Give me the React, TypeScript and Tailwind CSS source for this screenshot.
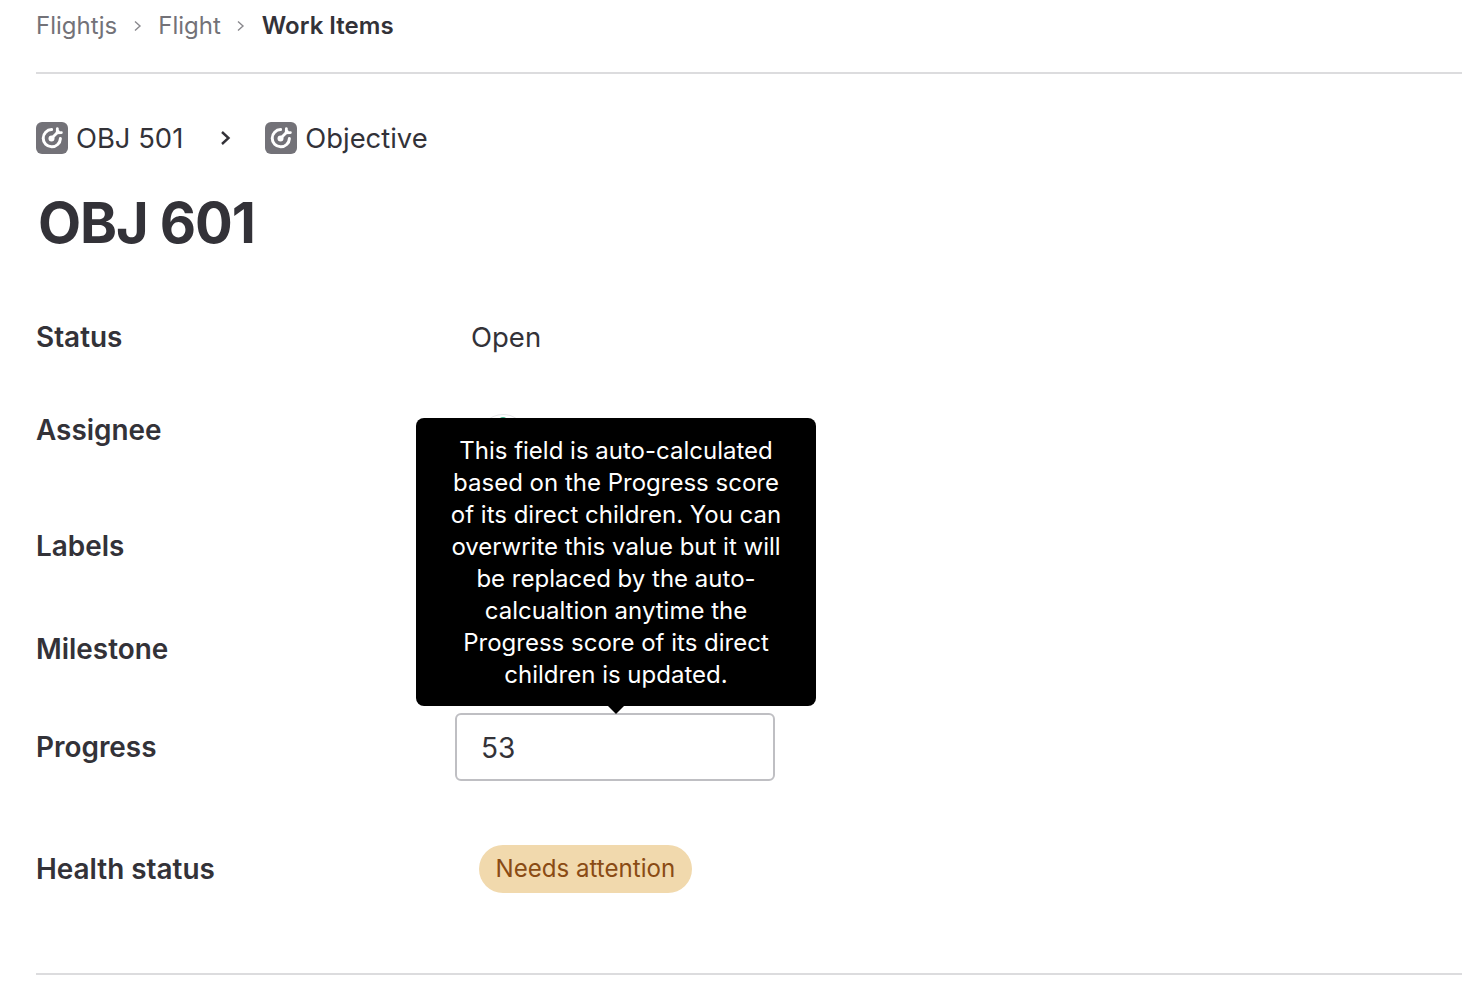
import React from "react";

const Obj = () => (
  <span className="flex h-8 w-8 shrink-0 items-center justify-center rounded-[6px] bg-[#737278]">
    <svg width="28" height="28" viewBox="0 0 28 28" fill="none" stroke="#fff" strokeLinecap="round">
      <path d="M13.6 5.6A8.6 8.6 0 1 0 22.4 14.6" strokeWidth="3" />
      <path d="M13.5 14.5 20.4 7.6" strokeWidth="2.8" />
      <path d="M19.4 4.6 19.2 8.8 23.4 8.6" strokeWidth="2.8" />
      <circle cx="13.5" cy="14.5" r="3" fill="#fff" stroke="none" />
    </svg>
  </span>
);

const Chevron = () => (
  <svg width="10" height="14" viewBox="0 0 10 14" fill="none" stroke="#89888d" strokeWidth="1.4">
    <path d="M2 2.5 7 7l-5 4.5" />
  </svg>
);

const Row = ({ label, h, children }: { label: string; h: string; children?: React.ReactNode }) => (
  <div className={`flex items-center ${h}`}>
    <div className="w-[419px] text-[27.9px] font-semibold leading-8 text-[#333238]">{label}</div>
    <div className="flex-1">{children}</div>
  </div>
);

export default function App() {
  return (
    <div className="relative h-[996px] overflow-hidden bg-white pl-9 text-[#333238] [font-family:Inter,sans-serif]">
      <nav className="flex h-[74px] items-start border-b-2 border-[#dcdcde] pt-[10px] text-[24px] leading-8">
        <span className="text-[#737278]">Flightjs</span>
        <span className="mx-[15.5px] flex h-8 items-center"><Chevron /></span>
        <span className="text-[#737278]">Flight</span>
        <span className="mx-[15.5px] flex h-8 items-center"><Chevron /></span>
        <span className="font-semibold">Work Items</span>
      </nav>

      <div className="mt-[48px] flex h-8 items-center text-[27.4px]">
        <Obj />
        <span className="ml-2 pt-px">OBJ 501</span>
        <svg className="ml-[36px] mr-[32px]" width="14" height="18" viewBox="0 0 14 18" fill="none" stroke="#333238" strokeWidth="2.4">
          <path d="M3 3l6.5 6L3 15" />
        </svg>
        <Obj />
        <span className="ml-2 pt-px">Objective</span>
      </div>

      <h1 className="ml-[2px] mt-[35px] text-[56px] font-bold leading-[68px] tracking-[-1.1px]">OBJ 601</h1>

      <div className="mt-[48px] w-[1000px]">
        <Row label="Status" h="h-[64px]">
          <span className="block pl-[16px] pt-[2px] text-[27.5px]">Open</span>
        </Row>
        <Row label="Assignee" h="h-[128px] pb-[6px]">
          <span className="ml-[24px] mt-[18px] flex h-12 w-12 justify-center rounded-full bg-white pt-[2px] shadow-[0_0_0_1px_#e6e6e8]">
            <span className="h-2 w-2 rounded-full bg-[#3fb68b]" />
          </span>
        </Row>
        <Row label="Labels" h="h-[98px]" />
        <Row label="Milestone" h="h-[108px]" />
        <Row label="Progress" h="h-[88px]">
          <input
            readOnly
            value="53"
            className="h-[68px] w-[320px] rounded-[6px] border-2 border-[#bfbfc3] bg-white pl-[24px] pt-px text-[28px] text-[#333238] outline-none"
          />
        </Row>
        <Row label="Health status" h="h-[156px]">
          <span className="ml-[24px] inline-flex h-12 items-center rounded-full bg-[#f1d9ad] pl-[16.5px] pr-[17px] pt-px text-[24.1px] text-[#8a4b14]">
            Needs attention
          </span>
        </Row>
      </div>

      <div className="absolute bottom-[21px] left-9 right-0 border-b-2 border-[#dcdcde]" />

      <div className="absolute left-[416px] top-[418px] h-[288px] w-[400px] rounded-[8px] bg-black px-4 pt-[17px] text-center text-[24px] leading-8 text-white">
        This field is auto-calculated<br />
        based on the Progress score<br />
        of its direct children. You can<br />
        overwrite this value but it will<br />
        be replaced by the auto-<br />
        calcualtion anytime the<br />
        Progress score of its direct<br />
        children is updated.
        <span className="absolute left-[192px] top-full h-0 w-0 border-x-[8px] border-t-[8px] border-x-transparent border-t-black" />
      </div>
    </div>
  );
}
